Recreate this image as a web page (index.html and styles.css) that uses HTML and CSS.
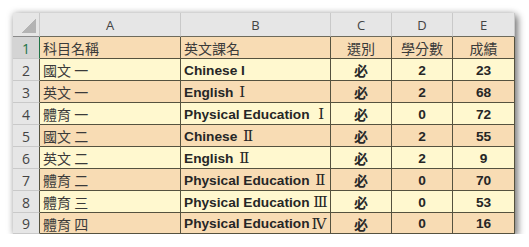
FILE: index.html
```html
<!DOCTYPE html>
<html lang="zh-Hant">
<head>
<meta charset="utf-8">
<title>成績表</title>
<link rel="stylesheet" href="styles.css">
</head>
<body>
<div class="sheet">
  <div class="corner"></div>
  <div class="colh">A</div>
  <div class="colh">B</div>
  <div class="colh">C</div>
  <div class="colh">D</div>
  <div class="colh">E</div>

  <div class="rowh sel">1</div>
  <div class="cell tan cjk first">科目名稱</div>
  <div class="cell tan cjk">英文課名</div>
  <div class="cell tan cjk mid">選別</div>
  <div class="cell tan cjk mid">學分數</div>
  <div class="cell tan cjk mid">成績</div>

  <div class="rowh">2</div>
  <div class="cell yel cjk">國文 一</div>
  <div class="cell yel en">Chinese I</div>
  <div class="cell yel cjk mid b">必</div>
  <div class="cell yel en mid">2</div>
  <div class="cell yel en mid">23</div>

  <div class="rowh">3</div>
  <div class="cell tan cjk">英文 一</div>
  <div class="cell tan en">English <span class="rn">Ⅰ</span></div>
  <div class="cell tan cjk mid b">必</div>
  <div class="cell tan en mid">2</div>
  <div class="cell tan en mid">68</div>

  <div class="rowh">4</div>
  <div class="cell yel cjk">體育 一</div>
  <div class="cell yel en">Physical Education <span class="rn wide">Ⅰ</span></div>
  <div class="cell yel cjk mid b">必</div>
  <div class="cell yel en mid">0</div>
  <div class="cell yel en mid">72</div>

  <div class="rowh">5</div>
  <div class="cell tan cjk">國文 二</div>
  <div class="cell tan en">Chinese <span class="rn">Ⅱ</span></div>
  <div class="cell tan cjk mid b">必</div>
  <div class="cell tan en mid">2</div>
  <div class="cell tan en mid">55</div>

  <div class="rowh">6</div>
  <div class="cell yel cjk">英文 二</div>
  <div class="cell yel en">English <span class="rn">Ⅱ</span></div>
  <div class="cell yel cjk mid b">必</div>
  <div class="cell yel en mid">2</div>
  <div class="cell yel en mid">9</div>

  <div class="rowh">7</div>
  <div class="cell tan cjk">體育 二</div>
  <div class="cell tan en">Physical Education <span class="rn">Ⅱ</span></div>
  <div class="cell tan cjk mid b">必</div>
  <div class="cell tan en mid">0</div>
  <div class="cell tan en mid">70</div>

  <div class="rowh">8</div>
  <div class="cell yel cjk">體育 三</div>
  <div class="cell yel en">Physical Education <span class="rn tight">Ⅲ</span></div>
  <div class="cell yel cjk mid b">必</div>
  <div class="cell yel en mid">0</div>
  <div class="cell yel en mid">53</div>

  <div class="rowh">9</div>
  <div class="cell tan cjk">體育 四</div>
  <div class="cell tan en">Physical Education<span class="rn">Ⅳ</span></div>
  <div class="cell tan cjk mid b">必</div>
  <div class="cell tan en mid">0</div>
  <div class="cell tan en mid">16</div>
</div>
</body>
</html>
```
FILE: styles.css
```css
html, body {
  margin: 0;
  padding: 0;
  background: #ffffff;
}
body {
  padding: 13px 0 0 13px;
}
.sheet {
  display: grid;
  grid-template-columns: 27px 141px 150px 61px 61px 62px;
  grid-template-rows: 24px repeat(8, 22px) 21px;
  width: 502px;
  background: #e6e6e6;
  box-shadow: 3px 3px 7px rgba(0, 0, 0, 0.45), 0 0 7px rgba(0, 0, 0, 0.22);
  font-family: "Liberation Sans", "Noto Sans CJK TC", sans-serif;
  color: #262626;
}
.sheet > div {
  box-sizing: border-box;
  display: flex;
  align-items: center;
  overflow: hidden;
  white-space: pre;
}
.corner {
  border-right: 1px solid #c9c9c9;
  border-bottom: 1px solid #8a8a8a;
  position: relative;
}
.corner::after {
  content: "";
  position: absolute;
  right: 3px;
  bottom: 3px;
  width: 15px;
  height: 15px;
  background: linear-gradient(to top left, #b4b4b4 50%, transparent 50%);
}
.colh {
  justify-content: center;
  font-family: "Open Sans", "Liberation Sans", sans-serif;
  font-size: 13px;
  color: #444444;
  background: #e6e6e6;
  border-right: 1px solid #c9c9c9;
  border-bottom: 1px solid #6e6b5c;
  padding-top: 1px;
}
.colh:last-child {
  border-right: none;
}
.rowh {
  justify-content: center;
  font-family: "Open Sans", "Liberation Sans", sans-serif;
  font-size: 14px;
  color: #444444;
  background: #e6e6e6;
  border-right: 1px solid #55523f;
  border-bottom: 1px solid #c9c9c9;
  padding-top: 1px;
}
.rowh.sel {
  background: #d4d4d4;
  color: #217346;
  border-right: 1px solid #217346;
}
.cell {
  border-right: 1px solid #55523f;
  border-bottom: 1px solid #55523f;
  padding-left: 3px;
  padding-top: 1px;
}
.tan {
  background: #f8dcb4;
}
.yel {
  background: #fff8cf;
}
.cjk {
  font-family: "Noto Sans CJK TC", sans-serif;
  font-size: 14px;
  line-height: 1;
  color: #3a3a3a;
}
.en {
  font-family: "Liberation Sans", "Noto Sans CJK TC", sans-serif;
  font-size: 13.7px;
  font-weight: bold;
  color: #262626;
}
.mid {
  justify-content: center;
  padding-left: 0;
}
.b {
  font-weight: 600;
  color: #2a2a2a;
}
.rn {
  font-family: "DejaVu Serif", "Noto Sans CJK TC", serif;
  font-weight: normal;
  font-size: 15px;
  margin-left: 2px;
}
.rn.wide {
  margin-left: 5px;
}
.rn.tight {
  margin-left: 0;
}
```
